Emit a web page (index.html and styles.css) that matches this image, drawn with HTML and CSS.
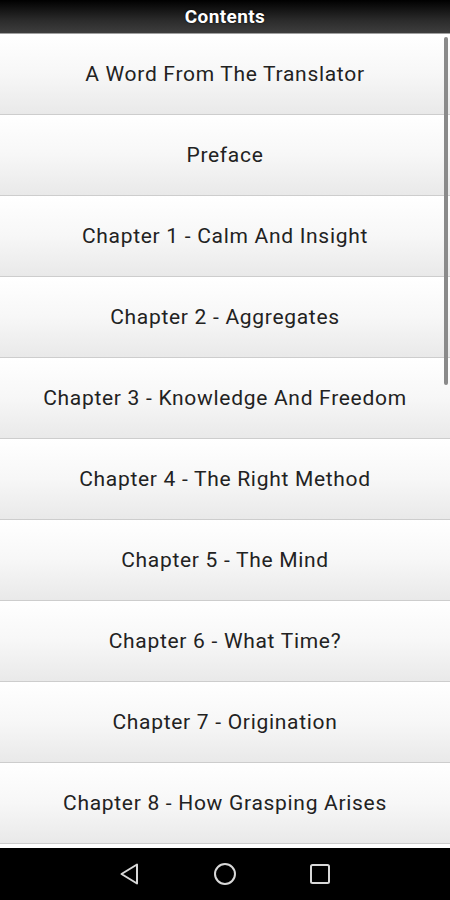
FILE: index.html
```html
<!DOCTYPE html>
<html>
<head>
<meta charset="utf-8">
<link rel="stylesheet" href="styles.css">
</head>
<body>
<div class="app">
  <header class="header">Contents</header>
  <div class="list">
    <div class="row">A Word From The Translator</div>
    <div class="row">Preface</div>
    <div class="row">Chapter 1 - Calm And Insight</div>
    <div class="row">Chapter 2 - Aggregates</div>
    <div class="row">Chapter 3 - Knowledge And Freedom</div>
    <div class="row">Chapter 4 - The Right Method</div>
    <div class="row">Chapter 5 - The Mind</div>
    <div class="row">Chapter 6 - What Time?</div>
    <div class="row">Chapter 7 - Origination</div>
    <div class="row">Chapter 8 - How Grasping Arises</div>
    <div class="scrollbar"></div>
  </div>
  <nav class="navbar">
    <svg class="nav-icon" viewBox="0 0 22 22" width="22" height="22"><path d="M18 1.5 L18 20.5 L2.5 11 Z" fill="none" stroke="#d8d8d8" stroke-width="2" stroke-linejoin="round"/></svg>
    <svg class="nav-icon" viewBox="0 0 24 24" width="24" height="24"><circle cx="12" cy="12" r="10" fill="none" stroke="#d8d8d8" stroke-width="2"/></svg>
    <svg class="nav-icon" viewBox="0 0 22 22" width="22" height="22"><rect x="2" y="2" width="18" height="18" rx="1.5" fill="none" stroke="#d8d8d8" stroke-width="2"/></svg>
  </nav>
</div>
</body>
</html>
```

FILE: styles.css
```css
html, body {
  margin: 0;
  padding: 0;
  background: #fff;
}
body {
  font-family: Roboto, "Liberation Sans", sans-serif;
}
.app {
  width: 450px;
  height: 900px;
  display: flex;
  flex-direction: column;
  overflow: hidden;
}
.header {
  height: 33px;
  flex: 0 0 33px;
  background: linear-gradient(to bottom, #000000 0%, #2a2a2a 60%, #3e3e3e 100%);
  border-bottom: 1px solid #a0a0a0;
  color: #fff;
  font-weight: bold;
  font-size: 19px;
  letter-spacing: 0.4px;
  display: flex;
  align-items: center;
  justify-content: center;
  text-shadow: 0 0 2px #000;
}
.list {
  position: relative;
  flex: 1 1 auto;
  overflow: hidden;
  background: #fff;
}
.row {
  height: 80px;
  border-bottom: 1px solid #cdcdcd;
  background: linear-gradient(to bottom, #ffffff 0%, #f7f7f7 50%, #e9e9e9 100%);
  display: flex;
  align-items: center;
  justify-content: center;
  font-size: 21px;
  letter-spacing: 0.7px;
  color: #222;
}
.scrollbar {
  position: absolute;
  right: 2px;
  top: 3px;
  width: 4px;
  height: 348px;
  border-radius: 2px;
  background: #8a8a8a;
}
.navbar {
  flex: 0 0 52px;
  height: 52px;
  background: #000;
  display: flex;
  align-items: center;
  justify-content: center;
  gap: 72px;
  box-sizing: border-box;
}
.nav-icon {
  display: block;
}
```
